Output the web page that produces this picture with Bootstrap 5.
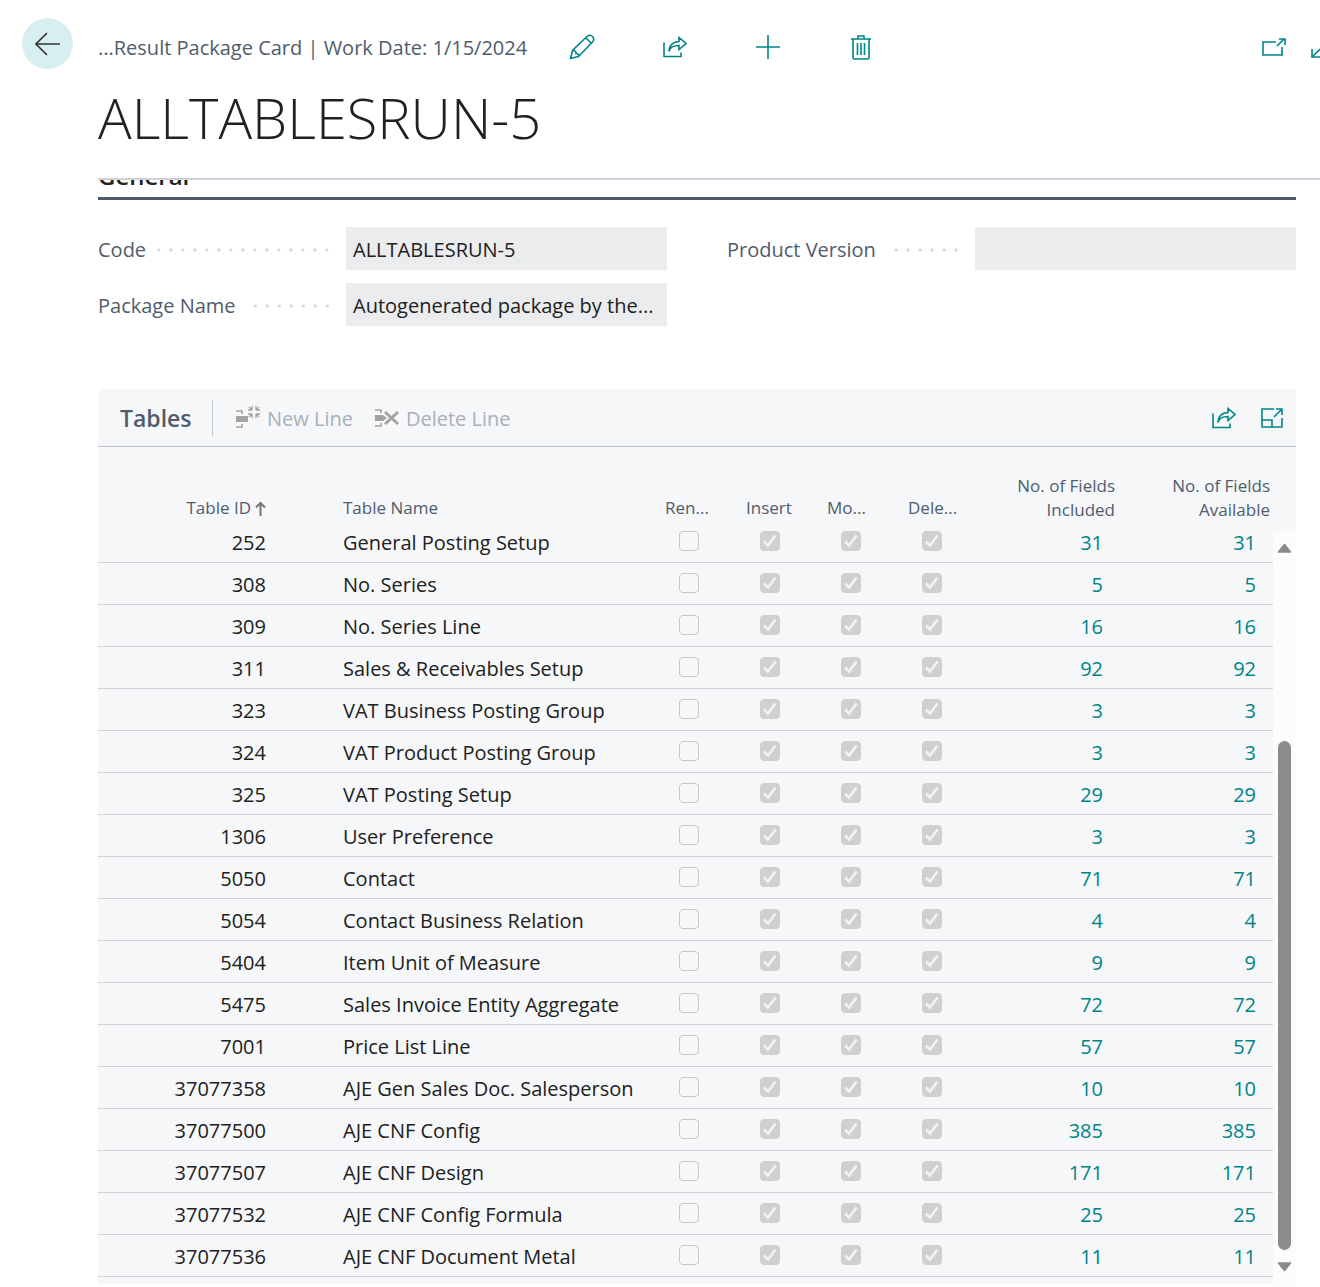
<!DOCTYPE html>
<html lang="en">
<head>
<meta charset="utf-8">
<meta name="viewport" content="width=device-width, initial-scale=1">
<title>Result Package Card</title>
<link href="https://cdn.jsdelivr.net/npm/bootstrap@5.3.0/dist/css/bootstrap.min.css" rel="stylesheet">
<style>
:root { --teal: #008489; --slate: #505c6d; --ink: #212121; --panel: #f5f7f9; }
body { font-family: "Open Sans", "Noto Sans", sans-serif; font-size: 20px; line-height: 30px; color: var(--ink); background: #fff; overflow-x: hidden; }
svg { display: block; fill: none; stroke: currentColor; stroke-width: 1.6; }
.tool { border: 0; background: none; padding: 0; color: var(--teal); display: flex; align-items: center; justify-content: center; flex: none; }
.page-head { padding-left: 22px; overflow: hidden; height: 78px; padding-top: 18px; }
.back { width: 51px; height: 51px; border-radius: 50%; background: #d8eff1; color: #333; }
.crumb { margin-left: 25px; flex: 0 0 437px; color: var(--slate); height: 60px; white-space: nowrap; }
.acts .tool { width: 93px; height: 58px; }
.wins { margin-right: -15px; gap: 25px; height: 57px; }
.gutter-l { margin-left: 98px; }
.title-row { height: 102px; border-bottom: 2px solid #cdd3da; }
.title-row h1 { font-size: 56px; line-height: 79px; font-weight: 300; margin: 0; white-space: nowrap; color: var(--ink); }
.body-area { margin-left: 98px; margin-right: 24px; }
.sec { height: 20px; border-bottom: 3px solid var(--slate); overflow: hidden; display: flex; align-items: flex-end; }
.sec h2 { font-size: 24px; line-height: 42px; font-weight: 600; margin: 0; color: var(--ink); }
.fields { padding-top: 27px; column-gap: 60px; margin-bottom: 63px; }
.fcol { flex: 1 1 0; min-width: 0; display: flex; flex-direction: column; gap: 13px; }
.fld { display: flex; align-items: center; height: 43px; }
.fld label { flex: 1; display: flex; align-items: center; color: var(--slate); white-space: nowrap; padding: 2px 13px 0 0; }
.fld label::after { content: ""; flex: 1; height: 4px; margin-left: 10px; background: radial-gradient(circle, #cfd4d9 0 1px, transparent 2px) right center / 12px 4px repeat-x; }
.fld input { flex: 0 0 321px; height: 43px; border: 0; border-radius: 0; background: #ebecee; color: var(--ink); font-size: 20px; padding: 2px 7px 0; text-overflow: ellipsis; }
.bar { height: 58px; background: var(--panel); border-bottom: 1px solid #bcc3cc; padding-left: 22px; padding-right: 12px; }
.bar h3 { font-size: 23px; line-height: 30px; font-weight: 600; color: var(--slate); margin: 0; width: 92px; }
.vline { width: 1px; height: 36px; background: #c3c8cf; margin-right: 23px; }
.ghost { color: #aab0ba; gap: 6px; font-size: 20px; margin-right: 22px; white-space: nowrap; }
.ghost span { padding-top: 2px; }
.ghost:disabled { opacity: 1; }
.ghost svg { color: #a3a3a3; }
.sheet { flex: 1; min-width: 0; background: var(--panel); padding-bottom: 7px; margin-bottom: 3px; }
.grid-t { width: 100%; table-layout: fixed; border-collapse: separate; border-spacing: 0; }
.grid-t th { height: 75px; vertical-align: bottom; font-weight: 400; font-size: 17px; line-height: 24px; color: var(--slate); padding: 0 3px 2px 17px; white-space: nowrap; }
.grid-t th.two { padding-bottom: 0; }
.grid-t td { height: 42px; vertical-align: bottom; line-height: 38px; padding: 0; border-bottom: 1px solid #d0d4d9; white-space: nowrap; }
.grid-t tbody tr:first-child td { height: 41px; }
.grid-t .c-id { text-align: right; padding-right: 65px; }
.grid-t td.c-name, .grid-t th.c-name { padding-left: 12px; }
.grid-t .c-inc { text-align: right; padding-right: 15px; }
.grid-t .c-av { text-align: right; padding-right: 17px; }
.grid-t a { color: var(--teal); text-decoration: none; }
.grid-t td.c-box { padding-bottom: 11px; }
.grid-t .form-check-input { display: block; width: 20px; height: 20px; margin: 0 auto; border: 1px solid #c8c8c8; border-radius: 4px; background-color: #f7f7f7; }
.grid-t .form-check-input:disabled { opacity: 1; }
.grid-t .form-check-input:checked { border-color: #d0d0d0; background-color: #d0d0d0; background-image: url("data:image/svg+xml,%3Csvg xmlns='http://www.w3.org/2000/svg' viewBox='0 0 16 16'%3E%3Cpath d='M2 8.5l4 4L13.500 2.500' fill='none' stroke='%23f3f3f3' stroke-width='2.600'/%3E%3C/svg%3E"); background-size: 16px 16px; }
.scroller { flex: 0 0 23px; padding-top: 84px; background: var(--panel); }
.track { height: 100%; background: #fcfcfc; padding: 12px 0 15px; display: flex; flex-direction: column; align-items: center; }
.track svg { fill: #8b8b8b; stroke: #8b8b8b; stroke-linejoin: round; flex: none; }
.rail { flex: 1; display: flex; flex-direction: column; justify-content: flex-end; padding-bottom: 12px; }
.thumb { width: 13px; height: 73%; border-radius: 7px; background: #8b8b8b; }
</style>
<script src="https://cdn.jsdelivr.net/npm/bootstrap@5.3.0/dist/js/bootstrap.bundle.min.js"></script>
</head>
<body>
<svg class="d-none" aria-hidden="true">
  <symbol id="share" viewBox="0 0 24 22"><path d="M1 6v14h17v-4M6 15C7 10 11 9 16 9v4l7-6-7-6v4C10 5 6 9 6 15z" transform="translate(0 .5)"/></symbol>
</svg>
<header>
  <div class="page-head d-flex align-items-start">
    <button class="tool back" aria-label="Back"><svg width="25" height="24" viewBox="0 0 25 24"><path d="M1 12h24M12 1L1 12l11 11"/></svg></button>
    <div class="crumb d-flex align-items-center">...Result Package Card | Work Date: 1/15/2024</div>
    <div class="acts d-flex">
      <button class="tool" aria-label="Edit"><svg width="26" height="26" viewBox="0 0 26 26" stroke-width="1.500"><path d="M1.500 24.500l2-8L18 2.500q3-2.500 5.500 0t0 5.500L9.500 22.500zM3.500 16.500q4 0 3.500 3 3-.5 2.500 3M17 4l5 5"/></svg></button>
      <button class="tool" aria-label="Share"><svg width="24" height="22"><use href="#share"/></svg></button>
      <button class="tool" aria-label="New"><svg width="26" height="26" viewBox="0 0 26 26"><path d="M13 1v24M1 13h24"/></svg></button>
      <button class="tool" aria-label="Delete"><svg width="20" height="26" viewBox="0 0 20 26"><path d="M0 5h20M7 5V2h6v3M2 5v19q0 1 1 1h14q1 0 1-1V5M6.500 9v12M10 9v12M13.500 9v12"/></svg></button>
    </div>
    <div class="wins d-flex align-items-center ms-auto">
      <button class="tool" aria-label="Open in new window"><svg width="24" height="18" viewBox="0 0 24 18"><path d="M14 4H1v13h19v-8M15 8l7-7M17 1h6v6"/></svg></button>
      <button class="tool" aria-label="Expand page"><svg width="24" height="24" viewBox="0 0 24 24"><path d="M1 22L22 2M1 14v8h8M15 2h7v7"/></svg></button>
    </div>
  </div>
  <div class="title-row gutter-l"><h1>ALLTABLESRUN-5</h1></div>
</header>
<main class="body-area">
  <div class="sec"><h2>General</h2></div>
  <form class="fields d-flex">
    <div class="fcol">
      <div class="fld"><label for="code">Code</label><input class="form-control" id="code" value="ALLTABLESRUN-5" readonly></div>
      <div class="fld"><label for="pname">Package Name</label><input class="form-control" id="pname" value="Autogenerated package by the..." readonly></div>
    </div>
    <div class="fcol">
      <div class="fld"><label for="pver">Product Version</label><input class="form-control" id="pver" readonly></div>
    </div>
  </form>
  <section>
    <div class="bar d-flex align-items-center">
      <h3>Tables</h3><div class="vline"></div>
      <button class="tool ghost" disabled><svg width="25" height="24" viewBox="0 0 25 24"><path d="M0 5h6v3M0 21h6v-3"/><path d="M0 10h12v6H0z" fill="currentColor" stroke="none"/><path d="M16 0v4M20 0v4M16 8v4M20 8v4M12 4h4M20 4h4M12 8h4M20 8h4M13 1l3 3M20 8l3 3M23 1l-3 3M16 8l-3 3" stroke-width="1.300"/></svg><span>New Line</span></button>
      <button class="tool ghost" disabled><svg width="25" height="20" viewBox="0 0 25 20"><path d="M0 2h6v3M0 18h6v-3"/><path d="M0 7h8l4 3-4 3H0z" fill="currentColor" stroke="none"/><path d="M10 4l13 12M23 4L10 16" stroke-width="3"/></svg><span>Delete Line</span></button>
      <button class="tool ms-auto" aria-label="Share table"><svg width="24" height="22"><use href="#share"/></svg></button>
      <button class="tool ms-4" aria-label="Enter focus mode"><svg width="24" height="20" viewBox="0 0 24 20"><path d="M14 1H2v18h20v-9M2 12h10v7M14 9l7-7M16 1h6v6"/></svg></button>
    </div>
    <div class="d-flex">
      <div class="sheet">
        <table class="grid-t">
          <colgroup><col style="width:233px"><col><col style="width:81px"><col style="width:81px"><col style="width:81px"><col style="width:81px"><col style="width:146px"><col style="width:155px"></colgroup>
          <thead><tr>
            <th class="c-id"><span class="d-inline-flex align-items-center gap-1">Table ID <svg width="11" height="15" viewBox="0 0 11 15"><path d="M5.500 15V2M1 6.500L5.500 2 10 6.500" stroke="#777" stroke-width="2"/></svg></span></th>
            <th class="c-name">Table Name</th><th>Ren...</th><th>Insert</th><th>Mo...</th><th>Dele...</th>
            <th class="two text-end">No. of Fields<br>Included</th><th class="two text-end">No. of Fields<br>Available</th>
          </tr></thead>
          <tbody id="rows"></tbody>
        </table>
      </div>
      <div class="scroller"><div class="track">
        <svg width="15" height="10" viewBox="0 0 15 10"><path d="M7.500 1.500L1.500 9h12z"/></svg>
        <div class="rail"><div class="thumb"></div></div>
        <svg width="15" height="10" viewBox="0 0 15 10"><path d="M7.500 8.500L1.500 1h12z"/></svg>
      </div></div>
    </div>
  </section>
</main>
<script>
const tables = [
  [252, "General Posting Setup", 31], [308, "No. Series", 5], [309, "No. Series Line", 16],
  [311, "Sales & Receivables Setup", 92], [323, "VAT Business Posting Group", 3],
  [324, "VAT Product Posting Group", 3], [325, "VAT Posting Setup", 29], [1306, "User Preference", 3],
  [5050, "Contact", 71], [5054, "Contact Business Relation", 4], [5404, "Item Unit of Measure", 9],
  [5475, "Sales Invoice Entity Aggregate", 72], [7001, "Price List Line", 57],
  [37077358, "AJE Gen Sales Doc. Salesperson", 10], [37077500, "AJE CNF Config", 385],
  [37077507, "AJE CNF Design", 171], [37077532, "AJE CNF Config Formula", 25],
  [37077536, "AJE CNF Document Metal", 11]
];
const box = (label, on) => `<td class="c-box"><input class="form-check-input" type="checkbox" aria-label="${label}" disabled${on ? " checked" : ""}></td>`;
document.getElementById("rows").innerHTML = tables.map(([id, name, n]) =>
  `<tr><td class="c-id">${id}</td><td class="c-name">${name.replace("&", "&amp;")}</td>` +
  box("Rename", false) + box("Insert", true) + box("Modify", true) + box("Delete", true) +
  `<td class="c-inc"><a href="#">${n}</a></td><td class="c-av"><a href="#">${n}</a></td></tr>`).join("");
</script>
</body>
</html>
